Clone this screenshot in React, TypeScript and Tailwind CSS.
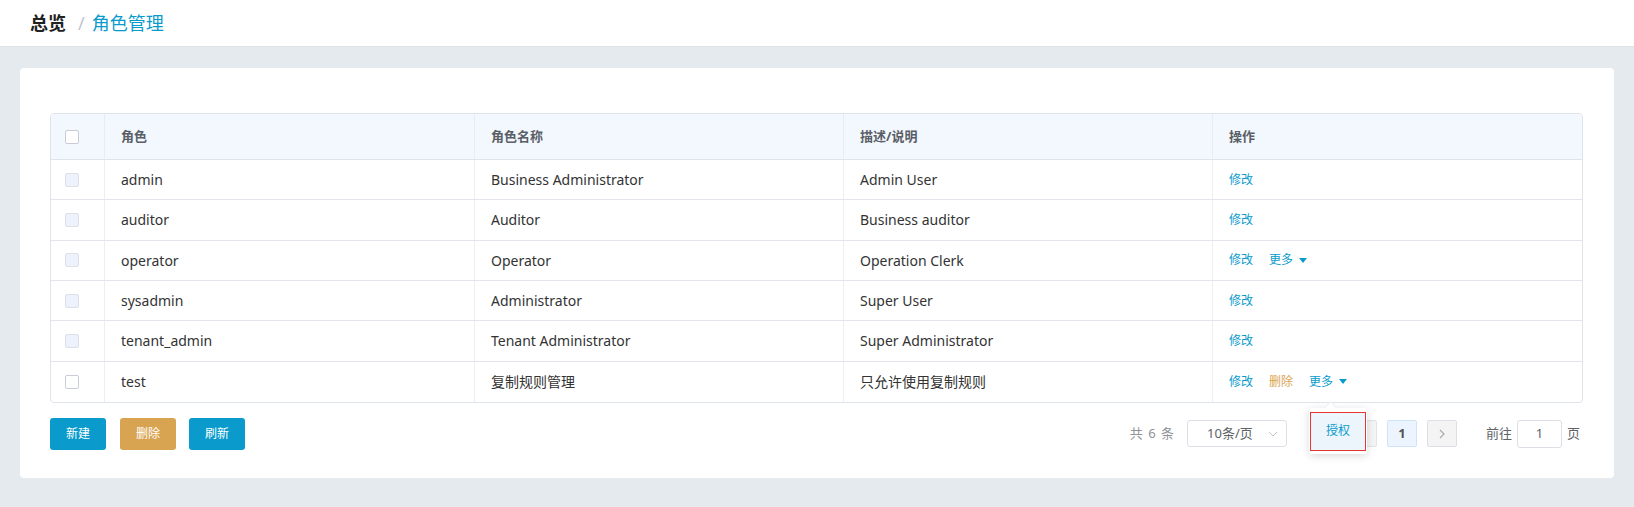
import React from "react";

const rows = [
  { role: "admin", name: "Business Administrator", desc: "Admin User", ops: ["edit"], disabled: true },
  { role: "auditor", name: "Auditor", desc: "Business auditor", ops: ["edit"], disabled: true },
  { role: "operator", name: "Operator", desc: "Operation Clerk", ops: ["edit", "more"], disabled: true },
  { role: "sysadmin", name: "Administrator", desc: "Super User", ops: ["edit"], disabled: true },
  { role: "tenant_admin", name: "Tenant Administrator", desc: "Super Administrator", ops: ["edit"], disabled: true },
  { role: "test", name: "复制规则管理", desc: "只允许使用复制规则", ops: ["edit", "del", "more"], disabled: false },
];

const font = { fontFamily: '"Noto Sans", "Noto Sans CJK SC", sans-serif' };

function Checkbox({ disabled }: { disabled?: boolean }) {
  return (
    <span
      className={
        "block w-[14px] h-[14px] rounded-[2px] border " +
        (disabled ? "bg-[#edf2fc] border-[#dcdfe6]" : "bg-white border-[#c8ccd4]")
      }
    />
  );
}

function Caret() {
  return (
    <svg width="8" height="5" viewBox="0 0 8 5" className="ml-[6px]">
      <path d="M0 0 L8 0 L4 5 Z" fill="#0a9bcc" />
    </svg>
  );
}

export default function App() {
  return (
    <div className="w-[1634px] h-[507px] bg-[#e4eaed] flex flex-col" style={font}>
      <div className="h-[47px] bg-white border-b border-[#dde3e6] flex items-center pl-[30px] text-[18px]">
        <span className="font-bold text-[#222]">总览</span>
        <span className="ml-[12px] mr-[7px] text-[#c0c4cc]">/</span>
        <span className="text-[#0a9bcc]">角色管理</span>
      </div>
      <div className="mx-[20px] mt-[21px] h-[410px] bg-white rounded-[4px] pt-[45px] pl-[30px] pr-[31px] relative">
        <div className="border border-[#dfe3ea] rounded-[4px] overflow-hidden">
          <div className="grid grid-cols-[54px_370px_369px_369px_1fr] h-[46px] bg-[#f3f8fe] border-b border-[#dfe3ea] text-[13px] font-bold text-[#5a5e66]">
            <div className="flex items-center pl-[14px] border-r border-[#e8edf3]">
              <Checkbox />
            </div>
            <div className="flex items-center pl-[16px] border-r border-[#e8edf3]">角色</div>
            <div className="flex items-center pl-[16px] border-r border-[#e8edf3]">角色名称</div>
            <div className="flex items-center pl-[16px] border-r border-[#e8edf3]">描述/说明</div>
            <div className="flex items-center pl-[16px]">操作</div>
          </div>
          {rows.map((r, i) => (
            <div
              key={r.role}
              className={
                "grid grid-cols-[54px_370px_369px_369px_1fr] h-[40.33px] text-[14px] text-[#333] " +
                (i < rows.length - 1 ? "border-b border-[#e2e6ec]" : "")
              }
            >
              <div className="flex items-center pl-[14px] border-r border-[#ebeef3]">
                <Checkbox disabled={r.disabled} />
              </div>
              <div className="flex items-center pl-[16px] border-r border-[#ebeef3]">{r.role}</div>
              <div className="flex items-center pl-[16px] border-r border-[#ebeef3]">{r.name}</div>
              <div className="flex items-center pl-[16px] border-r border-[#ebeef3]">{r.desc}</div>
              <div className="flex items-center pl-[16px] gap-[16px] text-[12px]">
                {r.ops.map((o) =>
                  o === "edit" ? (
                    <span key={o} className="text-[#0a9bcc]">修改</span>
                  ) : o === "del" ? (
                    <span key={o} className="text-[#d9a452]">删除</span>
                  ) : (
                    <span key={o} className="flex items-center text-[#0a9bcc]">
                      更多
                      <Caret />
                    </span>
                  )
                )}
              </div>
            </div>
          ))}
        </div>
        <div className="flex items-center mt-[15px] h-[32px]">
          <button className="w-[56px] h-[32px] rounded-[3px] bg-[#0a9bcc] text-white text-[12px]">新建</button>
          <button className="ml-[14px] w-[56px] h-[32px] rounded-[3px] bg-[#d9a452] text-white text-[12px]">删除</button>
          <button className="ml-[13px] w-[56px] h-[32px] rounded-[3px] bg-[#0a9bcc] text-white text-[12px]">刷新</button>
          <div className="ml-auto flex items-center text-[13px] mr-[3px]">
            <span className="text-[#909399] tracking-[1px]">共 6 条</span>
            <div className="ml-[12px] w-[100px] h-[27px] border border-[#dcdfe6] rounded-[3px] flex items-center pl-[12px] pr-[8px] text-[#606266]">
              <span className="flex-1 text-center pr-[8px]">10条/页</span>
              <svg width="10" height="6" viewBox="0 0 10 6">
                <path d="M1 1 L5 5 L9 1" fill="none" stroke="#c0c4cc" strokeWidth="1" />
              </svg>
            </div>
            <div className="ml-[60px] w-[30px] h-[27px] rounded-[2px] border border-[#dfe3ea] bg-[#f4f4f5]" />
            <div className="ml-[10px] w-[30px] h-[27px] rounded-[2px] border border-[#cfe4f8] bg-[#ecf5ff] flex items-center justify-center font-bold text-[#555]">1</div>
            <div className="ml-[10px] w-[30px] h-[27px] rounded-[2px] border border-[#dcdfe6] bg-[#f4f4f5] flex items-center justify-center">
              <svg width="6" height="10" viewBox="0 0 6 10">
                <path d="M1 1 L5 5 L1 9" fill="none" stroke="#a8abb2" strokeWidth="1.2" />
              </svg>
            </div>
            <span className="ml-[29px] text-[#606266]">前往</span>
            <div className="ml-[5px] w-[45px] h-[28px] border border-[#dcdfe6] rounded-[3px] flex items-center justify-center text-[#606266]">1</div>
            <span className="ml-[5px] text-[#606266]">页</span>
          </div>
        </div>
        <div className="absolute left-[1289px] top-[340px] w-[58px] h-[46px] bg-white rounded-[3px] shadow-[0_2px_8px_rgba(0,0,0,0.15)] flex items-center justify-center">
          <div className="absolute -top-[5px] left-[17px] w-[9px] h-[9px] bg-white rotate-45 border-l border-t border-[#ebeef5]" />
          <div className="relative w-[56px] h-[39px] border border-[#e8352f] bg-[#ecf5fc] flex items-center justify-center text-[12px] text-[#0a9bcc]">
            授权
          </div>
        </div>
      </div>
    </div>
  );
}
